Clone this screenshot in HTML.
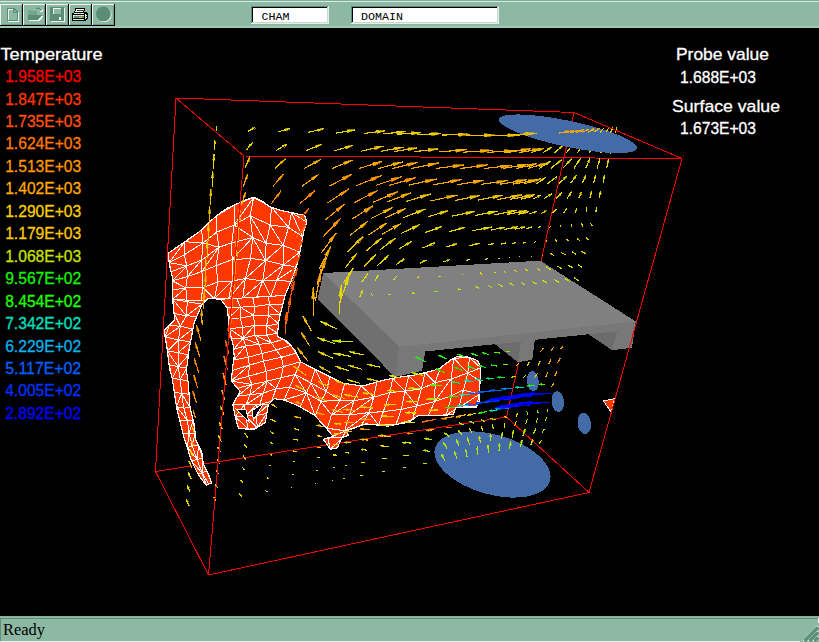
<!DOCTYPE html>
<html><head><meta charset="utf-8"><title>Viewer</title>
<style>
html,body{margin:0;padding:0;background:#000;overflow:hidden}
body{width:819px;height:642px}
svg{display:block}
</style></head><body>
<svg width="819" height="642" viewBox="0 0 819 642">
<rect x="0" y="0" width="819" height="642" fill="#000"/>
<g shape-rendering="crispEdges">
<path d="M176 98 L574 112.5" stroke="#FF0000" stroke-width="1" fill="none"/>
<path d="M574 112.5 L682 158.5" stroke="#FF0000" stroke-width="1" fill="none"/>
<path d="M682 158.5 L244 156" stroke="#FF0000" stroke-width="1" fill="none"/>
<path d="M244 156 L176 98" stroke="#FF0000" stroke-width="1" fill="none"/>
<path d="M574 112.5 L506.5 417" stroke="#FF0000" stroke-width="1" fill="none"/>
<path d="M155.5 471.5 L506.5 417" stroke="#FF0000" stroke-width="1" fill="none"/>
<path d="M506.5 417 L589 492.5" stroke="#FF0000" stroke-width="1" fill="none"/>
<ellipse cx="492.5" cy="464.5" rx="59.75" ry="29.9" transform="rotate(15.9 492.5 464.5)" fill="#426BA8"/>
<path d="M538.3 385.6 L538.1 386.4 L537.8 387.1 L537.6 387.8 L537.2 388.4 L536.9 389.0 L536.5 389.5 L536.1 389.9 L535.7 390.3 L535.2 390.6 L534.7 390.8 L534.2 391.0 L533.7 391.1 L533.2 391.1 L532.7 391.0 L532.2 390.9 L531.7 390.6 L531.2 390.3 L530.8 390.0 L530.3 389.6 L529.8 389.1 L529.4 388.5 L529.0 387.9 L528.7 387.3 L528.3 386.6 L528.0 385.8 L527.8 385.0 L527.6 384.2 L527.4 383.4 L527.2 382.6 L527.1 381.7 L527.1 380.8 L527.1 380.0 L527.1 379.1 L527.2 378.3 L527.3 377.5 L527.4 376.7 L527.6 375.9 L527.9 375.2 L528.1 374.5 L528.4 373.9 L528.8 373.4 L529.2 372.8 L529.6 372.4 L530.0 372.0 L530.5 371.7 L530.9 371.5 L531.4 371.3 L531.9 371.2 L532.4 371.2 L532.9 371.2 L533.4 371.4 L533.9 371.6 L534.4 371.9 L534.9 372.2 L535.4 372.6 L535.8 373.1 L536.3 373.7 L536.7 374.3 L537.0 374.9 L537.4 375.6 L537.7 376.4 L537.9 377.2 L538.2 378.0 L538.4 378.8 L538.5 379.7 L538.6 380.6 L538.7 381.4 L538.7 382.3 L538.7 383.2 L538.6 384.0 L538.5 384.9 Z" fill="#426BA8"/>
<path d="M563.6 406.5 L563.4 407.3 L563.1 408.0 L562.8 408.7 L562.5 409.3 L562.1 409.9 L561.7 410.4 L561.2 410.8 L560.8 411.2 L560.3 411.5 L559.7 411.7 L559.2 411.9 L558.7 411.9 L558.1 411.9 L557.6 411.8 L557.1 411.7 L556.5 411.4 L556.0 411.1 L555.5 410.7 L555.0 410.3 L554.5 409.7 L554.1 409.2 L553.7 408.5 L553.3 407.8 L552.9 407.1 L552.6 406.3 L552.3 405.5 L552.1 404.7 L551.9 403.8 L551.7 402.9 L551.6 402.1 L551.6 401.2 L551.6 400.3 L551.6 399.4 L551.7 398.6 L551.8 397.7 L552.0 396.9 L552.2 396.1 L552.4 395.4 L552.7 394.7 L553.1 394.1 L553.4 393.5 L553.9 393.0 L554.3 392.6 L554.7 392.2 L555.2 391.9 L555.7 391.6 L556.3 391.5 L556.8 391.4 L557.3 391.4 L557.9 391.5 L558.4 391.6 L559.0 391.8 L559.5 392.1 L560.0 392.5 L560.5 393.0 L561.0 393.5 L561.4 394.1 L561.9 394.7 L562.3 395.4 L562.6 396.1 L563.0 396.9 L563.3 397.7 L563.5 398.6 L563.7 399.5 L563.9 400.4 L564.0 401.3 L564.0 402.2 L564.0 403.1 L564.0 404.0 L563.9 404.8 L563.8 405.7 Z" fill="#426BA8"/>
<path d="M590.5 428.7 L590.3 429.5 L590.0 430.2 L589.6 430.9 L589.3 431.5 L588.9 432.1 L588.4 432.6 L587.9 433.1 L587.4 433.4 L586.9 433.7 L586.4 433.9 L585.8 434.1 L585.2 434.1 L584.6 434.1 L584.1 434.0 L583.5 433.8 L582.9 433.5 L582.3 433.2 L581.8 432.8 L581.3 432.3 L580.8 431.7 L580.3 431.1 L579.8 430.4 L579.4 429.7 L579.0 429.0 L578.7 428.1 L578.4 427.3 L578.1 426.4 L577.9 425.5 L577.8 424.6 L577.7 423.7 L577.6 422.8 L577.6 421.9 L577.6 421.0 L577.7 420.1 L577.9 419.2 L578.1 418.4 L578.3 417.6 L578.6 416.9 L578.9 416.2 L579.3 415.5 L579.7 414.9 L580.1 414.4 L580.6 414.0 L581.1 413.6 L581.6 413.3 L582.1 413.1 L582.7 412.9 L583.2 412.9 L583.8 412.9 L584.4 413.0 L585.0 413.1 L585.6 413.4 L586.1 413.7 L586.7 414.1 L587.2 414.6 L587.8 415.2 L588.2 415.8 L588.7 416.4 L589.1 417.2 L589.5 417.9 L589.9 418.8 L590.2 419.6 L590.4 420.5 L590.6 421.4 L590.8 422.3 L590.9 423.3 L591.0 424.2 L591.0 425.1 L590.9 426.1 L590.9 427.0 L590.7 427.8 Z" fill="#426BA8"/>
<path d="M323.1 273.1 L540.3 260.7 L635.8 321.5 L399.3 346.7 Z" fill="#808080"/>
<path d="M323.1 273.1 L399.3 346.7 L395.0 377.0 L317.6 299.5 Z" fill="#707070"/>
<path d="M399.3 346.7 L635.8 321.5 L632.0 347.7 L612.0 350.2 L617.0 331.3 L588.4 334.3 L534.8 339.8 L532.3 359.7 L517.9 362.2 L521.0 341.7 L495.0 344.2 L425.3 351.5 L422.0 370.9 L395.0 377.0 Z" fill="#787878"/>
<path d="M495.0 344.2 L521.0 341.7 L517.9 362.2 Z" fill="#6C6C6C"/>
<path d="M588.4 334.3 L617.0 331.3 L612.0 350.2 Z" fill="#6C6C6C"/>
<clipPath id="isoclip"><path d="M253.8 197.4 L261.6 200.7 L269.4 206.6 L281.1 210.5 L304.6 215.4 L306.9 222.2 L303.6 232.0 L300.7 248.6 L296.7 266.2 L290.9 281.8 L285.0 295.4 L279.2 318.8 L277.2 336.4 L287.0 341.3 L294.8 350.1 L300.7 361.8 L309.3 366.3 L326.2 374.8 L343.0 383.2 L362.7 386.0 L382.3 380.4 L396.4 377.6 L416.0 374.8 L427.3 372.0 L438.5 369.1 L449.7 360.7 L456.7 356.5 L466.6 356.5 L477.8 360.7 L480.6 367.7 L480.0 381.8 L479.2 401.4 L476.4 407.0 L463.8 407.0 L455.5 408.0 L453.3 414.7 L438.5 415.3 L418.0 415.4 L409.3 422.0 L388.0 426.1 L365.5 423.9 L354.2 428.1 L345.8 430.9 L348.6 435.1 L341.6 437.9 L337.4 447.8 L330.4 449.2 L323.4 439.3 L333.2 436.5 L326.2 428.1 L314.9 415.5 L298.0 405.6 L284.0 400.0 L274.2 398.7 L268.3 404.6 L265.4 422.4 L253.5 429.8 L238.7 428.3 L235.8 419.4 L232.8 404.6 L240.2 391.3 L231.3 381.0 L232.8 366.2 L234.2 356.0 L233.3 346.2 L229.3 328.6 L227.4 308.1 L220.6 299.3 L207.9 298.3 L202.0 304.2 L194.2 322.7 L189.3 348.1 L186.4 370.0 L188.4 384.0 L190.0 407.6 L194.4 425.3 L195.8 440.0 L201.8 452.0 L203.2 463.8 L209.0 475.6 L211.5 483.0 L206.2 485.0 L198.8 475.6 L191.4 460.8 L184.0 437.2 L176.6 407.6 L172.2 378.0 L169.8 370.0 L166.8 346.2 L163.9 330.6 L174.7 319.8 L172.7 299.3 L172.1 276.0 L169.8 266.2 L167.8 253.5 L183.4 242.7 L199.1 232.0 L214.7 217.3 L226.4 208.6 L246.0 199.8 Z"/></clipPath>
<path d="M253.8 197.4 L261.6 200.7 L269.4 206.6 L281.1 210.5 L304.6 215.4 L306.9 222.2 L303.6 232.0 L300.7 248.6 L296.7 266.2 L290.9 281.8 L285.0 295.4 L279.2 318.8 L277.2 336.4 L287.0 341.3 L294.8 350.1 L300.7 361.8 L309.3 366.3 L326.2 374.8 L343.0 383.2 L362.7 386.0 L382.3 380.4 L396.4 377.6 L416.0 374.8 L427.3 372.0 L438.5 369.1 L449.7 360.7 L456.7 356.5 L466.6 356.5 L477.8 360.7 L480.6 367.7 L480.0 381.8 L479.2 401.4 L476.4 407.0 L463.8 407.0 L455.5 408.0 L453.3 414.7 L438.5 415.3 L418.0 415.4 L409.3 422.0 L388.0 426.1 L365.5 423.9 L354.2 428.1 L345.8 430.9 L348.6 435.1 L341.6 437.9 L337.4 447.8 L330.4 449.2 L323.4 439.3 L333.2 436.5 L326.2 428.1 L314.9 415.5 L298.0 405.6 L284.0 400.0 L274.2 398.7 L268.3 404.6 L265.4 422.4 L253.5 429.8 L238.7 428.3 L235.8 419.4 L232.8 404.6 L240.2 391.3 L231.3 381.0 L232.8 366.2 L234.2 356.0 L233.3 346.2 L229.3 328.6 L227.4 308.1 L220.6 299.3 L207.9 298.3 L202.0 304.2 L194.2 322.7 L189.3 348.1 L186.4 370.0 L188.4 384.0 L190.0 407.6 L194.4 425.3 L195.8 440.0 L201.8 452.0 L203.2 463.8 L209.0 475.6 L211.5 483.0 L206.2 485.0 L198.8 475.6 L191.4 460.8 L184.0 437.2 L176.6 407.6 L172.2 378.0 L169.8 370.0 L166.8 346.2 L163.9 330.6 L174.7 319.8 L172.7 299.3 L172.1 276.0 L169.8 266.2 L167.8 253.5 L183.4 242.7 L199.1 232.0 L214.7 217.3 L226.4 208.6 L246.0 199.8 Z" fill="#FF3800"/>
<path d="M167.8 253.5L184.8 241.7 M184.8 241.7L201.6 229.7 M201.6 229.7L216.8 215.7 M216.8 215.7L234.3 205.0 M234.3 205.0L253.6 197.5 M253.6 197.5L271.5 207.3 M271.5 207.3L291.4 212.6 M291.4 212.6L306.9 222.2 M169.2 262.6L184.2 254.8 M184.2 254.8L202.9 243.0 M202.9 243.0L216.7 232.2 M216.7 232.2L234.1 225.0 M234.1 225.0L250.1 215.7 M250.1 215.7L270.1 225.0 M270.1 225.0L288.6 227.4 M288.6 227.4L302.7 236.9 M171.1 271.7L186.8 265.9 M186.8 265.9L201.7 260.0 M201.7 260.0L219.0 247.2 M219.0 247.2L231.7 242.9 M231.7 242.9L252.6 237.5 M252.6 237.5L266.1 243.3 M266.1 243.3L283.0 245.4 M283.0 245.4L299.9 252.0 M172.2 280.8L187.4 276.7 M187.4 276.7L201.9 271.4 M201.9 271.4L216.2 265.6 M216.2 265.6L232.1 259.7 M232.1 259.7L250.6 258.4 M250.6 258.4L265.6 260.5 M265.6 260.5L283.6 264.9 M283.6 264.9L296.4 266.9 M172.5 290.1L185.8 287.8 M185.8 287.8L202.9 287.6 M202.9 287.6L217.8 282.0 M217.8 282.0L232.3 281.0 M232.3 281.0L245.4 278.5 M245.4 278.5L262.7 280.9 M262.7 280.9L276.6 280.4 M276.6 280.4L291.1 281.3 M172.7 299.3L186.8 300.1 M186.8 300.1L200.9 300.9 M200.9 300.9L214.5 298.8 M214.5 298.8L228.6 298.8 M228.6 298.8L242.7 298.0 M242.7 298.0L256.8 297.1 M256.8 297.1L270.9 296.3 M270.9 296.3L285.0 295.4 M167.8 253.5L169.2 262.6 M184.8 241.7L184.2 254.8 M201.6 229.7L202.9 243.0 M216.8 215.7L216.7 232.2 M234.3 205.0L234.1 225.0 M253.6 197.5L250.1 215.7 M271.5 207.3L270.1 225.0 M291.4 212.6L288.6 227.4 M306.9 222.2L302.7 236.9 M169.2 262.6L171.1 271.7 M184.2 254.8L186.8 265.9 M202.9 243.0L201.7 260.0 M216.7 232.2L219.0 247.2 M234.1 225.0L231.7 242.9 M250.1 215.7L252.6 237.5 M270.1 225.0L266.1 243.3 M288.6 227.4L283.0 245.4 M302.7 236.9L299.9 252.0 M171.1 271.7L172.2 280.8 M186.8 265.9L187.4 276.7 M201.7 260.0L201.9 271.4 M219.0 247.2L216.2 265.6 M231.7 242.9L232.1 259.7 M252.6 237.5L250.6 258.4 M266.1 243.3L265.6 260.5 M283.0 245.4L283.6 264.9 M299.9 252.0L296.4 266.9 M172.2 280.8L172.5 290.1 M187.4 276.7L185.8 287.8 M201.9 271.4L202.9 287.6 M216.2 265.6L217.8 282.0 M232.1 259.7L232.3 281.0 M250.6 258.4L245.4 278.5 M265.6 260.5L262.7 280.9 M283.6 264.9L276.6 280.4 M296.4 266.9L291.1 281.3 M172.5 290.1L172.7 299.3 M185.8 287.8L186.8 300.1 M202.9 287.6L200.9 300.9 M217.8 282.0L214.5 298.8 M232.3 281.0L228.6 298.8 M245.4 278.5L242.7 298.0 M262.7 280.9L256.8 297.1 M276.6 280.4L270.9 296.3 M291.1 281.3L285.0 295.4 M184.8 241.7L169.2 262.6 M184.8 241.7L202.9 243.0 M253.6 197.5L234.1 225.0 M271.5 207.3L288.6 227.4 M291.4 212.6L302.7 236.9 M169.2 262.6L186.8 265.9 M202.9 243.0L219.0 247.2 M234.1 225.0L252.6 237.5 M250.1 215.7L266.1 243.3 M270.1 225.0L283.0 245.4 M186.8 265.9L172.2 280.8 M201.7 260.0L187.4 276.7 M219.0 247.2L201.9 271.4 M252.6 237.5L232.1 259.7 M252.6 237.5L265.6 260.5 M283.0 245.4L265.6 260.5 M299.9 252.0L283.6 264.9 M172.2 280.8L185.8 287.8 M265.6 260.5L245.4 278.5 M283.6 264.9L262.7 280.9 M296.4 266.9L276.6 280.4 M185.8 287.8L172.7 299.3 M202.9 287.6L214.5 298.8 M232.3 281.0L214.5 298.8 M245.4 278.5L228.6 298.8 M262.7 280.9L242.7 298.0 M262.7 280.9L270.9 296.3 M172.7 299.3L187.3 301.8 M187.3 301.8L202.0 304.2 M174.1 313.4L186.4 315.8 M186.4 315.8L196.9 316.4 M169.3 325.2L180.3 326.3 M180.3 326.3L193.0 329.0 M165.1 337.0L178.5 339.9 M178.5 339.9L190.5 341.9 M167.4 350.9L178.2 352.6 M178.2 352.6L188.4 355.0 M169.2 364.9L178.1 366.7 M178.1 366.7L186.7 368.1 M172.3 378.7L180.3 379.2 M180.3 379.2L188.0 381.2 M174.4 392.6L181.6 393.3 M181.6 393.3L189.1 394.3 M176.5 406.6L183.7 408.1 M183.7 408.1L190.0 407.5 M179.8 420.3L187.4 420.4 M187.4 420.4L193.2 420.4 M183.2 434.0L189.1 433.3 M189.1 433.3L195.2 433.4 M187.3 447.6L192.1 445.8 M192.1 445.8L198.7 445.9 M191.5 461.0L197.0 459.3 M197.0 459.3L202.6 458.4 M197.8 473.7L202.0 473.0 M202.0 473.0L206.6 470.7 M206.2 485.0L208.8 484.0 M208.8 484.0L211.5 483.0 M172.7 299.3L174.1 313.4 M187.3 301.8L186.4 315.8 M202.0 304.2L196.9 316.4 M174.1 313.4L169.3 325.2 M186.4 315.8L180.3 326.3 M196.9 316.4L193.0 329.0 M169.3 325.2L165.1 337.0 M180.3 326.3L178.5 339.9 M193.0 329.0L190.5 341.9 M165.1 337.0L167.4 350.9 M178.5 339.9L178.2 352.6 M190.5 341.9L188.4 355.0 M167.4 350.9L169.2 364.9 M178.2 352.6L178.1 366.7 M188.4 355.0L186.7 368.1 M169.2 364.9L172.3 378.7 M178.1 366.7L180.3 379.2 M186.7 368.1L188.0 381.2 M172.3 378.7L174.4 392.6 M180.3 379.2L181.6 393.3 M188.0 381.2L189.1 394.3 M174.4 392.6L176.5 406.6 M181.6 393.3L183.7 408.1 M189.1 394.3L190.0 407.5 M176.5 406.6L179.8 420.3 M183.7 408.1L187.4 420.4 M190.0 407.5L193.2 420.4 M179.8 420.3L183.2 434.0 M187.4 420.4L189.1 433.3 M193.2 420.4L195.2 433.4 M183.2 434.0L187.3 447.6 M189.1 433.3L192.1 445.8 M195.2 433.4L198.7 445.9 M187.3 447.6L191.5 461.0 M192.1 445.8L197.0 459.3 M198.7 445.9L202.6 458.4 M191.5 461.0L197.8 473.7 M197.0 459.3L202.0 473.0 M202.6 458.4L206.6 470.7 M197.8 473.7L206.2 485.0 M202.0 473.0L208.8 484.0 M206.6 470.7L211.5 483.0 M172.7 299.3L186.4 315.8 M202.0 304.2L186.4 315.8 M174.1 313.4L180.3 326.3 M180.3 326.3L165.1 337.0 M193.0 329.0L178.5 339.9 M178.5 339.9L167.4 350.9 M190.5 341.9L178.2 352.6 M167.4 350.9L178.1 366.7 M188.4 355.0L178.1 366.7 M178.1 366.7L172.3 378.7 M186.7 368.1L180.3 379.2 M181.6 393.3L176.5 406.6 M181.6 393.3L190.0 407.5 M176.5 406.6L187.4 420.4 M193.2 420.4L189.1 433.3 M189.1 433.3L187.3 447.6 M195.2 433.4L192.1 445.8 M187.3 447.6L197.0 459.3 M198.7 445.9L197.0 459.3 M191.5 461.0L202.0 473.0 M202.6 458.4L202.0 473.0 M202.0 473.0L206.2 485.0 M220.6 299.3L236.7 298.3 M236.7 298.3L252.8 297.4 M252.8 297.4L268.9 296.4 M268.9 296.4L285.0 295.4 M227.1 307.7L240.3 307.1 M240.3 307.1L254.6 306.5 M254.6 306.5L269.1 304.5 M269.1 304.5L282.7 304.8 M228.3 318.1L240.2 318.0 M240.2 318.0L253.8 315.5 M253.8 315.5L268.5 315.1 M268.5 315.1L280.3 314.2 M229.3 328.7L242.5 327.4 M242.5 327.4L254.3 325.4 M254.3 325.4L266.6 325.9 M266.6 325.9L278.6 323.8 M231.7 339.0L243.2 338.2 M243.2 338.2L255.0 335.2 M255.0 335.2L266.7 335.0 M266.7 335.0L277.5 333.4 M233.6 349.4L245.5 345.8 M245.5 345.8L259.3 344.3 M259.3 344.3L271.3 342.8 M271.3 342.8L283.2 339.4 M233.7 359.9L248.4 357.3 M248.4 357.3L261.9 353.4 M261.9 353.4L276.2 350.1 M276.2 350.1L290.6 345.4 M232.4 370.5L249.3 365.2 M249.3 365.2L263.5 361.1 M263.5 361.1L281.5 357.3 M281.5 357.3L296.3 353.1 M231.3 381.0L248.6 376.2 M248.6 376.2L266.0 371.4 M266.0 371.4L283.4 366.6 M283.4 366.6L300.7 361.8 M220.6 299.3L227.1 307.7 M236.7 298.3L240.3 307.1 M252.8 297.4L254.6 306.5 M268.9 296.4L269.1 304.5 M285.0 295.4L282.7 304.8 M227.1 307.7L228.3 318.1 M240.3 307.1L240.2 318.0 M254.6 306.5L253.8 315.5 M269.1 304.5L268.5 315.1 M282.7 304.8L280.3 314.2 M228.3 318.1L229.3 328.7 M240.2 318.0L242.5 327.4 M253.8 315.5L254.3 325.4 M268.5 315.1L266.6 325.9 M280.3 314.2L278.6 323.8 M229.3 328.7L231.7 339.0 M242.5 327.4L243.2 338.2 M254.3 325.4L255.0 335.2 M266.6 325.9L266.7 335.0 M278.6 323.8L277.5 333.4 M231.7 339.0L233.6 349.4 M243.2 338.2L245.5 345.8 M255.0 335.2L259.3 344.3 M266.7 335.0L271.3 342.8 M277.5 333.4L283.2 339.4 M233.6 349.4L233.7 359.9 M245.5 345.8L248.4 357.3 M259.3 344.3L261.9 353.4 M271.3 342.8L276.2 350.1 M283.2 339.4L290.6 345.4 M233.7 359.9L232.4 370.5 M248.4 357.3L249.3 365.2 M261.9 353.4L263.5 361.1 M276.2 350.1L281.5 357.3 M290.6 345.4L296.3 353.1 M232.4 370.5L231.3 381.0 M249.3 365.2L248.6 376.2 M263.5 361.1L266.0 371.4 M281.5 357.3L283.4 366.6 M296.3 353.1L300.7 361.8 M240.3 307.1L228.3 318.1 M240.3 307.1L253.8 315.5 M269.1 304.5L280.3 314.2 M268.5 315.1L278.6 323.8 M229.3 328.7L243.2 338.2 M254.3 325.4L243.2 338.2 M266.6 325.9L277.5 333.4 M243.2 338.2L233.6 349.4 M243.2 338.2L259.3 344.3 M255.0 335.2L271.3 342.8 M245.5 345.8L233.7 359.9 M249.3 365.2L231.3 381.0 M231.3 381.0L248.6 376.2 M248.6 376.2L266.0 371.4 M266.0 371.4L283.4 366.6 M283.4 366.6L300.7 361.8 M237.6 388.3L251.8 384.5 M251.8 384.5L267.1 381.3 M267.1 381.3L281.0 377.7 M281.0 377.7L295.1 374.5 M237.5 396.2L250.0 394.7 M250.0 394.7L263.4 393.1 M263.4 393.1L276.0 388.7 M276.0 388.7L289.6 387.3 M232.8 404.6L246.2 404.6 M246.2 404.6L259.7 404.6 M259.7 404.6L271.7 401.2 M271.7 401.2L284.0 400.0 M231.3 381.0L237.6 388.3 M248.6 376.2L251.8 384.5 M266.0 371.4L267.1 381.3 M283.4 366.6L281.0 377.7 M300.7 361.8L295.1 374.5 M237.6 388.3L237.5 396.2 M251.8 384.5L250.0 394.7 M267.1 381.3L263.4 393.1 M281.0 377.7L276.0 388.7 M295.1 374.5L289.6 387.3 M237.5 396.2L232.8 404.6 M250.0 394.7L246.2 404.6 M263.4 393.1L259.7 404.6 M276.0 388.7L271.7 401.2 M289.6 387.3L284.0 400.0 M231.3 381.0L251.8 384.5 M251.8 384.5L237.5 396.2 M267.1 381.3L250.0 394.7 M267.1 381.3L276.0 388.7 M263.4 393.1L246.2 404.6 M232.8 404.6L244.6 404.6 M244.6 404.6L256.5 404.6 M256.5 404.6L268.3 404.6 M235.2 416.6L245.6 416.2 M245.6 416.2L256.5 415.4 M256.5 415.4L266.9 413.5 M238.7 428.3L248.3 429.3 M248.3 429.3L257.2 427.5 M257.2 427.5L265.4 422.4 M232.8 404.6L235.2 416.6 M244.6 404.6L245.6 416.2 M256.5 404.6L256.5 415.4 M268.3 404.6L266.9 413.5 M235.2 416.6L238.7 428.3 M245.6 416.2L248.3 429.3 M256.5 415.4L257.2 427.5 M266.9 413.5L265.4 422.4 M244.6 404.6L235.2 416.6 M256.5 404.6L245.6 416.2 M268.3 404.6L256.5 415.4 M235.2 416.6L248.3 429.3 M245.6 416.2L257.2 427.5 M266.9 413.5L257.2 427.5 M300.7 361.8L315.3 369.3 M315.3 369.3L329.9 376.7 M329.9 376.7L344.7 383.4 M344.7 383.4L361.0 385.8 M361.0 385.8L376.8 382.0 M376.8 382.0L392.7 378.3 M392.7 378.3L408.9 375.8 M408.9 375.8L425.0 372.6 M425.0 372.6L440.4 367.7 M440.4 367.7L453.8 358.2 M453.8 358.2L469.5 357.6 M469.5 357.6L480.6 367.7 M295.1 374.5L310.8 382.8 M310.8 382.8L326.3 391.5 M326.3 391.5L340.1 400.1 M340.1 400.1L353.9 400.7 M353.9 400.7L373.7 397.2 M373.7 397.2L390.0 392.5 M390.0 392.5L405.0 391.2 M405.0 391.2L421.5 388.7 M421.5 388.7L435.2 382.6 M435.2 382.6L451.1 379.0 M451.1 379.0L467.8 373.1 M467.8 373.1L480.0 381.0 M289.6 387.3L306.5 392.9 M306.5 392.9L320.9 401.4 M320.9 401.4L331.5 414.9 M331.5 414.9L349.5 414.8 M349.5 414.8L369.1 412.6 M369.1 412.6L383.3 411.6 M383.3 411.6L401.4 409.3 M401.4 409.3L416.6 406.0 M416.6 406.0L434.6 401.6 M434.6 401.6L451.7 395.6 M451.7 395.6L463.4 390.0 M463.4 390.0L479.5 394.3 M284.0 400.0L300.1 406.9 M300.1 406.9L315.2 415.9 M315.2 415.9L327.3 428.3 M327.3 428.3L344.7 430.7 M344.7 430.7L361.3 425.4 M361.3 425.4L378.6 425.2 M378.6 425.2L395.9 424.6 M395.9 424.6L412.5 419.6 M412.5 419.6L428.6 415.3 M428.6 415.3L446.2 415.0 M446.2 415.0L458.9 407.6 M458.9 407.6L476.4 407.0 M300.7 361.8L295.1 374.5 M315.3 369.3L310.8 382.8 M329.9 376.7L326.3 391.5 M344.7 383.4L340.1 400.1 M361.0 385.8L353.9 400.7 M376.8 382.0L373.7 397.2 M392.7 378.3L390.0 392.5 M408.9 375.8L405.0 391.2 M425.0 372.6L421.5 388.7 M440.4 367.7L435.2 382.6 M453.8 358.2L451.1 379.0 M469.5 357.6L467.8 373.1 M480.6 367.7L480.0 381.0 M295.1 374.5L289.6 387.3 M310.8 382.8L306.5 392.9 M326.3 391.5L320.9 401.4 M340.1 400.1L331.5 414.9 M353.9 400.7L349.5 414.8 M373.7 397.2L369.1 412.6 M390.0 392.5L383.3 411.6 M405.0 391.2L401.4 409.3 M421.5 388.7L416.6 406.0 M435.2 382.6L434.6 401.6 M451.1 379.0L451.7 395.6 M467.8 373.1L463.4 390.0 M480.0 381.0L479.5 394.3 M289.6 387.3L284.0 400.0 M306.5 392.9L300.1 406.9 M320.9 401.4L315.2 415.9 M331.5 414.9L327.3 428.3 M349.5 414.8L344.7 430.7 M369.1 412.6L361.3 425.4 M383.3 411.6L378.6 425.2 M401.4 409.3L395.9 424.6 M416.6 406.0L412.5 419.6 M434.6 401.6L428.6 415.3 M451.7 395.6L446.2 415.0 M463.4 390.0L458.9 407.6 M479.5 394.3L476.4 407.0 M315.3 369.3L326.3 391.5 M361.0 385.8L373.7 397.2 M392.7 378.3L405.0 391.2 M408.9 375.8L421.5 388.7 M425.0 372.6L435.2 382.6 M453.8 358.2L467.8 373.1 M480.6 367.7L467.8 373.1 M295.1 374.5L306.5 392.9 M310.8 382.8L320.9 401.4 M340.1 400.1L320.9 401.4 M353.9 400.7L331.5 414.9 M373.7 397.2L349.5 414.8 M405.0 391.2L416.6 406.0 M451.1 379.0L434.6 401.6 M306.5 392.9L284.0 400.0 M306.5 392.9L315.2 415.9 M369.1 412.6L344.7 430.7 M369.1 412.6L378.6 425.2 M479.5 394.3L458.9 407.6 M326.2 428.1L345.8 430.9 M327.7 438.1L342.5 437.6 M330.4 449.2L337.4 447.8 M326.2 428.1L327.7 438.1 M345.8 430.9L342.5 437.6 M327.7 438.1L330.4 449.2 M342.5 437.6L337.4 447.8 M345.8 430.9L327.7 438.1 M342.5 437.6L330.4 449.2" stroke="#fff" stroke-width="1" fill="none" clip-path="url(#isoclip)"/>
<path d="M253.8 197.4 L261.6 200.7 L269.4 206.6 L281.1 210.5 L304.6 215.4 L306.9 222.2 L303.6 232.0 L300.7 248.6 L296.7 266.2 L290.9 281.8 L285.0 295.4 L279.2 318.8 L277.2 336.4 L287.0 341.3 L294.8 350.1 L300.7 361.8 L309.3 366.3 L326.2 374.8 L343.0 383.2 L362.7 386.0 L382.3 380.4 L396.4 377.6 L416.0 374.8 L427.3 372.0 L438.5 369.1 L449.7 360.7 L456.7 356.5 L466.6 356.5 L477.8 360.7 L480.6 367.7 L480.0 381.8 L479.2 401.4 L476.4 407.0 L463.8 407.0 L455.5 408.0 L453.3 414.7 L438.5 415.3 L418.0 415.4 L409.3 422.0 L388.0 426.1 L365.5 423.9 L354.2 428.1 L345.8 430.9 L348.6 435.1 L341.6 437.9 L337.4 447.8 L330.4 449.2 L323.4 439.3 L333.2 436.5 L326.2 428.1 L314.9 415.5 L298.0 405.6 L284.0 400.0 L274.2 398.7 L268.3 404.6 L265.4 422.4 L253.5 429.8 L238.7 428.3 L235.8 419.4 L232.8 404.6 L240.2 391.3 L231.3 381.0 L232.8 366.2 L234.2 356.0 L233.3 346.2 L229.3 328.6 L227.4 308.1 L220.6 299.3 L207.9 298.3 L202.0 304.2 L194.2 322.7 L189.3 348.1 L186.4 370.0 L188.4 384.0 L190.0 407.6 L194.4 425.3 L195.8 440.0 L201.8 452.0 L203.2 463.8 L209.0 475.6 L211.5 483.0 L206.2 485.0 L198.8 475.6 L191.4 460.8 L184.0 437.2 L176.6 407.6 L172.2 378.0 L169.8 370.0 L166.8 346.2 L163.9 330.6 L174.7 319.8 L172.7 299.3 L172.1 276.0 L169.8 266.2 L167.8 253.5 L183.4 242.7 L199.1 232.0 L214.7 217.3 L226.4 208.6 L246.0 199.8 Z" fill="none" stroke="#fff" stroke-width="1.2"/>
<path d="M235.8 409 L249 421.8 L246 410 Z M252 410.6 L263.9 403 L253.5 420 Z" fill="#000" stroke="#fff" stroke-width="1"/>
<path d="M603.4 401 L614.6 398.6 L611.3 412.3 Z" fill="#FF3800" stroke="#fff" stroke-width="1"/>
<path d="M214.9 149.8L214.9 139.5M213.5 168.6L214.0 154.3M192.8 456.1L190.0 449.5M191.9 467.9L188.9 461.0M191.1 478.9L188.1 471.9M190.2 492.4L187.2 485.4M189.2 506.1L186.2 499.1M246.4 150.1L252.8 141.8M222.4 429.2L219.4 422.3M221.4 441.6L218.4 435.5M220.5 451.9L217.6 446.6M219.5 463.6L216.9 459.3M218.5 474.4L216.0 470.4M217.4 487.7L214.9 483.7M216.2 501.3L213.7 497.2M248.0 437.7L244.7 433.0M246.9 447.9L243.6 443.5M245.8 459.4L243.0 455.8M244.7 470.1L242.3 467.2M243.4 483.3L240.4 479.8M242.1 496.7L239.0 493.1M274.2 433.8L270.1 431.5M273.1 444.0L270.1 442.2M271.8 455.3L269.8 454.1M270.6 465.9L268.6 464.7M269.2 478.9L266.8 477.5M267.7 492.1L265.2 490.6M298.1 440.2L293.4 439.0M296.7 451.4L293.3 451.0M295.4 461.8L293.3 461.8M293.8 474.7L292.4 474.5M292.2 487.8L291.0 487.0M343.2 283.2L353.4 268.0M341.1 298.7L349.4 274.6M339.1 313.9L341.4 284.3M333.0 358.3L317.9 351.6M320.9 447.6L317.5 447.3M319.5 457.9L317.3 457.9M317.8 470.6L316.3 470.6M316.0 483.5L314.9 483.5M361.8 282.0L367.7 273.6M349.0 370.7L335.4 366.4M339.9 433.8L333.7 433.7M338.3 444.8L332.6 444.7M336.8 455.1L333.0 455.0M335.0 467.7L333.1 467.7M333.1 480.5L331.8 480.5M377.3 265.7L389.3 254.7M361.8 369.2L348.2 365.3M359.7 383.2L347.1 379.8M349.2 453.0L344.8 452.7M347.3 465.6L345.1 465.6M345.4 478.3L343.4 478.3M398.5 249.2L412.2 241.1M396.1 264.7L404.4 258.5M377.6 380.9L367.0 378.8M366.6 450.2L360.6 449.3M364.6 462.7L361.2 462.3M362.6 475.3L360.5 475.2M425.2 232.6L442.0 226.5M422.5 248.1L435.2 242.6M419.9 263.3L426.4 260.0M398.2 391.6L386.6 390.2M388.9 446.6L379.8 445.7M384.7 471.4L382.2 471.3M449.0 231.7L464.7 227.5M446.3 246.9L457.3 243.6M443.5 262.0L449.7 259.7M474.7 215.5L497.5 211.1M471.8 230.8L491.8 227.0M468.9 245.8L479.7 243.2M466.1 260.7L469.6 259.2M463.3 275.3L462.6 274.2M437.7 410.0L428.7 410.2M490.7 230.1L505.0 227.2M487.7 244.9L494.2 243.3M484.8 259.6L487.9 258.5M503.8 229.5L518.2 226.7M500.7 244.3L505.8 242.9M497.8 258.9L500.3 257.8M518.0 214.3L528.9 211.7M514.8 229.1L524.9 227.0M511.8 243.8L516.3 242.5M508.7 258.2L509.7 257.1M476.2 413.2L467.2 415.4M539.4 168.5L551.3 160.7M536.1 183.8L545.9 177.3M532.9 199.0L541.1 195.0M529.6 213.9L536.6 211.4M526.5 228.7L532.1 226.9M523.3 243.2L526.4 241.8M520.3 257.6L519.3 256.2M554.1 153.0L563.7 145.2M550.7 168.5L561.5 159.8M547.4 183.7L556.9 176.5M544.1 198.7L551.9 193.6M540.8 213.6L546.5 210.8M537.6 228.2L540.7 226.2M534.4 242.7L535.8 241.1M531.3 257.0L531.0 255.7M528.2 271.0L525.6 269.2M566.0 153.1L574.3 142.8M562.6 168.5L571.6 158.8M559.2 183.6L567.3 175.6M555.8 198.5L561.8 192.6M552.5 213.2L556.5 209.3M549.2 227.8L551.4 225.6M546.0 242.1L546.9 240.4M542.8 256.3L542.3 254.9M577.4 153.2L583.9 142.1M573.9 168.5L580.6 158.1M570.5 183.5L576.5 175.1M567.0 198.3L571.5 191.9M563.7 212.9L566.6 208.3M560.4 227.3L560.7 224.6M557.1 241.6L555.0 239.5M553.9 255.7L550.6 253.3M589.3 153.4L593.6 142.3M585.7 168.4L590.0 158.1M582.2 183.3L586.1 174.8M578.8 198.1L581.6 191.6M575.4 212.6L576.9 207.7M572.0 226.9L571.3 224.0M568.7 241.0L565.7 238.8M565.4 255.0L561.2 252.4M600.7 153.5L603.7 142.9M597.1 168.4L599.9 158.5M593.5 183.2L595.9 174.9M590.0 197.8L591.7 191.4M586.6 212.2L586.9 207.5M583.1 226.5L581.3 223.6M579.8 240.5L576.7 238.3M576.4 254.4L572.2 251.8M610.2 153.6L612.9 143.2M606.6 168.4L608.8 158.7M603.0 183.1L604.7 175.0M599.5 197.6L600.7 191.3M596.0 212.0L596.2 207.1M592.5 226.1L590.5 223.1M589.1 240.1L586.0 237.8M585.7 253.8L581.6 251.3" stroke="#E6D700" stroke-width="1.15" fill="none"/>
<path d="M214.9 139.5L215.9 143.6L213.9 143.6ZM214.0 154.3L214.8 160.1L212.8 160.0ZM190.0 449.5L192.0 451.8L190.2 452.6ZM188.9 461.0L191.1 463.4L189.2 464.1ZM188.1 471.9L190.3 474.3L188.4 475.1ZM187.2 485.4L189.3 487.8L187.4 488.6ZM186.2 499.1L188.3 501.5L186.5 502.3ZM252.8 141.8L251.0 145.7L249.5 144.5ZM219.4 422.3L221.5 424.7L219.7 425.5ZM218.4 435.5L220.5 437.5L218.7 438.4ZM217.6 446.6L219.6 448.3L217.9 449.2ZM353.4 268.0L350.4 274.8L348.3 273.4ZM349.4 274.6L347.6 284.8L344.6 283.7ZM341.4 284.3L342.1 296.3L338.9 296.0ZM317.9 351.6L324.4 353.2L323.5 355.4ZM367.7 273.6L366.1 277.5L364.5 276.4ZM335.4 366.4L341.1 367.2L340.5 369.1ZM333.7 433.7L336.2 432.8L336.1 434.8ZM389.3 254.7L385.3 259.9L383.7 258.3ZM348.2 365.3L353.9 365.9L353.4 367.8ZM347.1 379.8L352.4 380.2L351.9 382.1ZM412.2 241.1L407.3 245.3L406.2 243.4ZM404.4 258.5L401.7 261.8L400.5 260.2ZM367.0 378.8L371.4 378.7L371.0 380.6ZM360.6 449.3L363.1 448.7L362.8 450.6ZM442.0 226.5L435.7 230.1L434.8 227.8ZM435.2 242.6L430.5 245.7L429.8 243.9ZM426.4 260.0L424.3 262.2L423.4 260.4ZM386.6 390.2L391.4 389.8L391.1 391.7ZM379.8 445.7L383.5 445.0L383.3 447.0ZM464.7 227.5L458.7 230.3L458.1 228.1ZM457.3 243.6L453.2 245.9L452.6 244.0ZM449.7 259.7L447.6 261.5L446.9 259.7ZM497.5 211.1L488.7 214.5L488.1 211.3ZM491.8 227.0L484.0 229.9L483.5 227.1ZM479.7 243.2L475.6 245.2L475.2 243.3ZM428.7 410.2L432.2 409.1L432.3 411.1ZM505.0 227.2L499.5 229.3L499.1 227.3ZM494.2 243.3L491.9 244.9L491.4 243.0ZM518.2 226.7L512.6 228.8L512.2 226.8ZM528.9 211.7L524.7 213.7L524.3 211.8ZM524.9 227.0L521.1 228.8L520.7 226.8ZM467.2 415.4L470.6 413.5L471.1 415.5ZM551.3 160.7L547.1 164.6L546.0 163.0ZM545.9 177.3L542.5 180.7L541.4 179.1ZM541.1 195.0L538.2 197.5L537.4 195.7ZM536.6 211.4L534.1 213.4L533.5 211.5ZM563.7 145.2L560.5 149.1L559.2 147.5ZM561.5 159.8L557.8 164.1L556.6 162.5ZM556.9 176.5L553.7 180.2L552.5 178.6ZM551.9 193.6L549.3 196.5L548.2 194.8ZM546.5 210.8L544.7 212.8L543.8 211.0ZM574.3 142.8L571.8 147.6L570.2 146.3ZM571.6 158.8L568.7 163.3L567.3 162.0ZM567.3 175.6L564.8 179.5L563.3 178.1ZM561.8 192.6L560.1 195.6L558.7 194.2ZM583.9 142.1L582.2 147.1L580.4 146.1ZM580.6 158.1L578.8 162.8L577.1 161.7ZM576.5 175.1L574.9 179.0L573.3 177.9ZM571.5 191.9L570.5 195.1L568.9 193.9ZM593.6 142.3L592.8 147.1L591.0 146.3ZM590.0 158.1L589.2 162.6L587.4 161.9ZM586.1 174.8L585.5 178.6L583.6 177.8ZM581.6 191.6L581.4 194.6L579.6 193.8ZM603.7 142.9L603.5 147.4L601.6 146.8ZM599.9 158.5L599.7 162.7L597.8 162.2ZM595.9 174.9L595.9 178.5L594.0 177.9ZM591.7 191.4L592.0 194.2L590.1 193.7ZM612.9 143.2L612.8 147.6L610.8 147.1ZM608.8 158.7L608.9 162.8L606.9 162.4ZM604.7 175.0L605.0 178.4L603.1 178.0ZM600.7 191.3L601.2 194.0L599.2 193.6Z" fill="#E6D700" stroke="#E6D700" stroke-width="0.6"/>
<path d="M212.2 187.2L212.7 171.2M208.3 241.0L208.3 224.0M207.1 258.4L207.1 241.4M223.7 414.6L220.7 406.1M276.4 150.4L287.4 143.7M305.9 150.7L321.9 144.3M275.6 421.7L270.5 418.9M334.0 150.9L353.0 145.4M299.3 430.2L293.8 428.6M345.4 267.6L357.1 252.8M331.1 372.7L318.7 366.2M366.3 250.8L381.7 237.9M364.0 266.5L375.7 254.6M346.9 384.7L334.9 380.6M341.3 424.0L334.2 423.8M379.7 250.1L395.5 238.2M357.6 397.0L344.3 394.7M350.7 442.9L344.4 442.4M403.5 217.6L425.5 209.1M401.0 233.5L420.2 224.5M375.4 394.6L363.0 392.9M373.3 408.1L360.0 406.9M427.8 216.9L448.2 210.6M395.9 404.9L383.9 404.9M394.0 416.3L381.7 416.0M390.6 436.6L377.8 435.3M451.8 216.2L475.4 211.3M493.7 215.0L517.0 210.3M506.8 214.6L527.1 210.5M521.1 199.2L534.0 195.6M542.8 152.9L552.3 146.8M529.4 362.1L527.1 366.1M537.6 373.2L534.7 377.7" stroke="#EBCD00" stroke-width="1.15" fill="none"/>
<path d="M212.7 171.2L213.6 177.6L211.4 177.6ZM208.3 224.0L209.5 230.8L207.1 230.8ZM207.1 241.4L208.2 248.2L205.9 248.2ZM220.7 406.1L222.8 409.2L220.9 409.9ZM287.4 143.7L283.5 147.2L282.4 145.5ZM321.9 144.3L315.9 147.9L315.0 145.7ZM353.0 145.4L345.8 148.9L345.0 146.3ZM357.1 252.8L353.4 259.5L351.4 257.9ZM318.7 366.2L324.1 367.9L323.2 369.7ZM381.7 237.9L376.5 244.1L374.7 242.0ZM375.7 254.6L371.9 260.2L370.2 258.5ZM334.9 380.6L340.1 381.3L339.4 383.2ZM334.2 423.8L337.1 422.9L337.0 424.9ZM395.5 238.2L390.0 244.1L388.3 241.9ZM344.3 394.7L349.8 394.6L349.4 396.6ZM344.4 442.4L347.0 441.6L346.8 443.6ZM425.5 209.1L417.3 214.0L416.2 211.0ZM420.2 224.5L413.2 229.5L411.9 226.8ZM363.0 392.9L368.1 392.6L367.9 394.6ZM360.0 406.9L365.4 406.4L365.3 408.4ZM448.2 210.6L440.5 214.5L439.6 211.7ZM383.9 404.9L388.7 403.9L388.7 405.9ZM381.7 416.0L386.7 415.1L386.6 417.1ZM377.8 435.3L383.0 434.8L382.8 436.8ZM475.4 211.3L466.3 214.8L465.7 211.7ZM517.0 210.3L508.0 213.7L507.4 210.6ZM527.1 210.5L519.3 213.6L518.7 210.7ZM534.0 195.6L529.1 198.0L528.6 196.1ZM552.3 146.8L549.0 150.1L547.9 148.4Z" fill="#EBCD00" stroke="#EBCD00" stroke-width="0.6"/>
<path d="M210.9 205.4L210.9 188.8M209.6 223.4L209.6 206.4M205.8 275.5L205.9 258.5M193.5 445.6L191.3 439.9M244.8 168.6L249.9 156.5M277.2 407.6L271.3 404.0M311.6 331.3L302.7 315.7M306.1 375.6L293.5 366.2M304.3 390.0L294.9 385.2M361.2 151.2L383.7 146.1M347.5 251.7L363.0 236.5M329.2 386.9L318.0 381.5M322.4 436.5L316.8 435.7M380.6 151.4L403.6 147.0M394.5 151.5L416.9 147.9M414.0 151.7L438.0 148.9M406.1 201.5L430.8 193.9M368.2 440.1L360.4 439.4M392.4 425.9L379.1 424.7M454.6 200.5L480.0 195.6M477.6 200.1L503.0 195.2M496.7 199.7L522.2 194.8M509.9 199.4L534.7 194.6M530.8 152.8L544.1 148.3M524.3 183.9L540.8 178.7M554.2 382.8L551.2 387.3" stroke="#F0BE00" stroke-width="1.15" fill="none"/>
<path d="M210.9 188.8L212.0 195.5L209.7 195.5ZM209.6 206.4L210.8 213.2L208.4 213.2ZM205.9 258.5L207.0 265.3L204.7 265.3ZM191.3 439.9L193.1 441.8L191.3 442.6ZM249.9 156.5L248.8 161.7L246.9 160.9ZM271.3 404.0L274.2 404.6L273.1 406.3ZM302.7 315.7L307.4 321.3L305.2 322.5ZM293.5 366.2L299.2 369.1L297.9 370.8ZM294.9 385.2L299.1 386.3L298.2 388.0ZM383.7 146.1L375.0 149.7L374.3 146.6ZM363.0 236.5L357.9 243.7L355.8 241.5ZM318.0 381.5L322.9 382.8L322.0 384.5ZM403.6 147.0L394.7 150.3L394.1 147.2ZM416.9 147.9L408.2 150.9L407.7 147.8ZM438.0 148.9L428.6 151.6L428.2 148.4ZM430.8 193.9L421.4 198.5L420.4 195.4ZM360.4 439.4L363.6 438.7L363.4 440.7ZM379.1 424.7L384.5 424.2L384.3 426.2ZM480.0 195.6L470.2 199.2L469.6 196.0ZM503.0 195.2L493.2 198.7L492.6 195.6ZM522.2 194.8L512.3 198.3L511.7 195.2ZM534.7 194.6L525.1 198.1L524.5 195.0ZM544.1 148.3L539.1 151.0L538.5 149.1ZM540.8 178.7L534.5 182.0L533.8 179.7Z" fill="#F0BE00" stroke="#F0BE00" stroke-width="0.6"/>
<path d="M204.6 292.4L205.8 274.2M203.4 309.0L204.5 291.3M202.2 325.3L201.5 309.2M194.4 433.1L192.4 426.9M243.2 186.9L247.8 173.9M241.7 204.8L245.6 191.7M240.2 222.5L239.3 205.5M238.7 239.9L237.7 222.4M237.2 257.0L236.2 239.0M224.9 399.9L221.9 390.1M274.6 168.6L285.5 158.8M303.9 168.6L320.6 159.6M331.8 168.6L352.5 160.1M319.3 269.1L330.8 246.4M313.5 316.1L313.1 287.1M309.7 346.3L300.8 331.6M307.9 361.1L297.3 347.8M302.6 404.2L295.6 402.0M300.8 418.2L294.4 416.2M349.7 235.5L368.1 221.1M327.3 401.0L315.7 396.8M323.8 426.6L316.4 425.2M378.1 168.6L403.3 161.8M370.9 218.6L392.5 207.6M368.6 234.8L387.2 222.8M344.9 398.6L332.8 394.8M343.0 412.3L331.6 409.4M386.9 201.9L411.1 192.8M384.5 218.2L406.1 208.4M382.0 234.3L401.3 223.4M355.5 410.6L343.2 409.2M352.3 431.9L344.3 431.7M438.8 151.9L466.8 149.7M430.5 201.0L457.6 195.0M463.3 152.2L492.5 150.3M486.7 152.4L516.2 150.6M480.6 184.4L507.7 180.5M433.9 429.7L425.9 430.5M506.1 152.6L530.7 148.9M502.9 168.5L528.2 164.3M499.8 184.2L526.5 179.9M519.5 152.7L541.0 148.5M516.3 168.5L537.2 163.7M513.1 184.1L539.0 179.7M465.8 414.7L455.8 417.2M527.6 168.5L546.4 163.3M540.5 360.7L537.9 365.5M548.2 371.8L545.7 376.9" stroke="#F5AF00" stroke-width="1.15" fill="none"/>
<path d="M205.8 274.2L206.6 281.5L204.1 281.4ZM204.5 291.3L205.3 298.4L202.8 298.3ZM201.5 309.2L202.9 315.6L200.7 315.7ZM192.4 426.9L194.2 429.0L192.3 429.7ZM247.8 173.9L246.9 179.4L245.0 178.7ZM245.6 191.7L245.0 197.2L243.1 196.6ZM239.3 205.5L240.8 212.2L238.5 212.4ZM237.7 222.4L239.3 229.3L236.9 229.4ZM236.2 239.0L237.9 246.1L235.4 246.3ZM221.9 390.1L224.1 393.7L222.2 394.3ZM285.5 158.8L281.8 163.5L280.4 161.9ZM320.6 159.6L314.6 164.4L313.3 162.0ZM352.5 160.1L344.8 164.9L343.6 162.0ZM330.8 246.4L327.6 256.2L324.7 254.8ZM313.1 287.1L314.8 298.6L311.6 298.7ZM300.8 331.6L305.4 336.8L303.3 338.1ZM297.3 347.8L302.5 352.3L300.6 353.8ZM295.6 402.0L298.7 401.9L298.1 403.9ZM294.4 416.2L297.2 416.1L296.7 418.0ZM368.1 221.1L361.7 228.2L359.7 225.6ZM315.7 396.8L320.7 397.5L320.0 399.4ZM316.4 425.2L319.5 424.8L319.1 426.7ZM403.3 161.8L393.6 166.1L392.8 163.0ZM392.5 207.6L384.6 213.4L383.1 210.6ZM387.2 222.8L380.6 228.9L378.9 226.3ZM332.8 394.8L338.0 395.4L337.4 397.3ZM331.6 409.4L336.4 409.6L335.9 411.5ZM411.1 192.8L402.0 197.9L400.9 194.9ZM406.1 208.4L398.1 213.8L396.8 210.9ZM401.3 223.4L394.4 229.1L392.8 226.4ZM343.2 409.2L348.2 408.8L348.0 410.8ZM344.3 431.7L347.5 430.8L347.5 432.8ZM466.8 149.7L455.8 152.2L455.5 149.0ZM457.6 195.0L447.1 198.9L446.4 195.8ZM492.5 150.3L481.0 152.6L480.8 149.4ZM516.2 150.6L504.5 152.9L504.3 149.7ZM507.7 180.5L497.1 183.6L496.6 180.5ZM425.9 430.5L429.0 429.2L429.2 431.2ZM530.7 148.9L521.1 152.0L520.6 148.8ZM528.2 164.3L518.4 167.6L517.8 164.4ZM526.5 179.9L516.1 183.2L515.5 180.0ZM541.0 148.5L532.7 151.7L532.1 148.7ZM537.2 163.7L529.1 167.0L528.5 164.1ZM539.0 179.7L528.9 183.0L528.4 179.9ZM455.8 417.2L459.6 415.3L460.1 417.2ZM546.4 163.3L539.2 166.7L538.5 164.0Z" fill="#F5AF00" stroke="#F5AF00" stroke-width="0.6"/>
<path d="M201.1 341.4L196.4 324.7M199.9 357.3L195.0 341.8M195.5 418.3L193.2 410.6M234.3 290.4L233.3 273.2M226.2 384.9L223.0 373.3M272.8 186.6L283.7 173.9M329.6 186.0L352.1 174.1M327.5 203.1L349.0 188.8M325.4 219.9L344.5 204.1M323.3 236.6L340.7 218.1M356.5 185.7L381.6 175.5M354.2 202.6L378.0 190.4M375.7 185.5L401.8 176.6M389.4 185.3L416.4 177.5M412.7 433.1L406.7 433.7M453.6 416.6L441.6 419.0M554.2 346.8L551.2 350.3M563.3 345.8L560.3 349.1M560.2 358.3L557.5 362.9" stroke="#FF9600" stroke-width="1.15" fill="none"/>
<path d="M196.4 324.7L199.4 331.0L197.1 331.7ZM195.0 341.8L198.0 347.6L195.9 348.3ZM193.2 410.6L195.1 413.4L193.2 414.0ZM233.3 273.2L235.0 280.0L232.5 280.1ZM223.0 373.3L225.2 377.7L223.3 378.2ZM283.7 173.9L280.2 179.7L278.4 178.2ZM352.1 174.1L343.8 180.3L342.3 177.4ZM349.0 188.8L341.3 195.9L339.5 193.2ZM344.5 204.1L337.9 211.7L335.8 209.2ZM340.7 218.1L334.9 226.6L332.6 224.4ZM381.6 175.5L372.1 181.0L370.9 178.1ZM378.0 190.4L369.2 196.7L367.7 193.8ZM401.8 176.6L391.9 181.7L390.9 178.6ZM416.4 177.5L406.1 182.2L405.2 179.1ZM406.7 433.7L409.0 432.5L409.2 434.4ZM441.6 419.0L446.2 417.1L446.6 419.0Z" fill="#FF9600" stroke="#FF9600" stroke-width="0.6"/>
<path d="M198.8 372.9L194.4 358.5M197.7 388.3L193.7 374.8M196.6 403.4L192.6 390.6M232.9 306.8L231.6 290.4M271.0 204.2L281.0 190.7M299.9 203.6L314.9 190.8" stroke="#FF8700" stroke-width="1.15" fill="none"/>
<path d="M194.4 358.5L197.2 363.9L195.2 364.6ZM193.7 374.8L196.2 379.9L194.3 380.4ZM192.6 390.6L195.2 395.4L193.3 396.0ZM231.6 290.4L233.3 296.8L231.0 297.0ZM281.0 190.7L278.0 196.8L276.1 195.4ZM314.9 190.8L309.8 197.0L308.0 194.9Z" fill="#FF8700" stroke="#FF8700" stroke-width="0.6"/>
<path d="M235.8 273.8L234.8 255.8M301.9 186.3L318.9 174.4M321.3 252.9L336.2 233.0M317.3 284.9L326.6 256.6M315.4 300.6L321.1 269.3M358.8 168.6L382.4 161.2M351.9 219.2L373.0 205.7M325.4 414.8L316.7 412.9M373.3 202.2L397.6 191.7M391.9 168.6L418.1 162.3M353.8 422.2L344.3 422.1M411.3 168.5L439.2 162.8M408.7 185.1L436.9 178.9M371.5 419.6L360.5 419.3M369.9 429.3L359.8 428.9M436.0 168.5L464.1 164.9M433.2 184.9L461.9 179.5M460.4 168.5L487.7 164.8M457.5 184.6L484.2 180.3M483.7 168.5L511.7 165.5M543.5 348.1L540.2 352.0M551.2 359.4L548.5 364.2M557.2 370.6L554.8 376.0" stroke="#FAA200" stroke-width="1.15" fill="none"/>
<path d="M234.8 255.8L236.4 263.0L233.9 263.1ZM318.9 174.4L312.9 180.3L311.2 177.9ZM336.2 233.0L331.5 241.9L328.9 240.0ZM326.6 256.6L324.4 268.4L321.4 267.4ZM321.1 269.3L320.4 282.1L317.3 281.5ZM382.4 161.2L373.5 165.7L372.5 162.6ZM373.0 205.7L365.5 212.5L363.7 209.8ZM316.7 412.9L320.4 412.7L320.0 414.6ZM397.6 191.7L388.5 197.3L387.2 194.4ZM418.1 162.3L408.0 166.3L407.3 163.2ZM344.3 422.1L348.1 421.2L348.1 423.2ZM439.2 162.8L428.4 166.7L427.7 163.5ZM436.9 178.9L426.0 183.0L425.3 179.9ZM360.5 419.3L364.9 418.4L364.9 420.4ZM359.8 428.9L363.9 428.0L363.8 430.0ZM464.1 164.9L453.1 168.0L452.7 164.8ZM461.9 179.5L450.7 183.2L450.1 180.1ZM487.7 164.8L477.0 167.9L476.6 164.7ZM484.2 180.3L473.7 183.6L473.2 180.5ZM511.7 165.5L500.7 168.3L500.3 165.1Z" fill="#FAA200" stroke="#FAA200" stroke-width="0.6"/>
<path d="M231.6 322.9L229.6 308.0M227.5 369.8L223.8 355.9" stroke="#FF7800" stroke-width="1.15" fill="none"/>
<path d="M229.6 308.0L231.4 313.8L229.3 314.1ZM223.8 355.9L226.3 361.2L224.3 361.7Z" fill="#FF7800" stroke="#FF7800" stroke-width="0.6"/>
<path d="M230.2 338.7L228.1 325.4M228.9 354.4L225.4 339.9M298.0 220.8L308.9 208.7M296.1 237.6L305.9 225.1M287.1 318.2L290.9 295.6M285.4 333.7L286.6 311.6M435.9 419.3L421.9 422.1M451.5 427.0L446.5 427.5" stroke="#FF6400" stroke-width="1.15" fill="none"/>
<path d="M228.1 325.4L229.9 330.6L227.9 330.9ZM225.4 339.9L227.8 345.5L225.8 345.9ZM308.9 208.7L305.4 214.3L303.7 212.8ZM305.9 225.1L302.9 230.8L301.1 229.4ZM290.9 295.6L290.9 304.9L287.8 304.4ZM286.6 311.6L287.7 320.5L284.6 320.4ZM421.9 422.1L427.3 420.0L427.7 421.9Z" fill="#FF6400" stroke="#FF6400" stroke-width="0.6"/>
<path d="M294.3 254.2L303.0 240.0M292.5 270.6L300.3 254.9M290.7 286.7L297.6 268.2M288.9 302.6L294.4 280.8" stroke="#FF5000" stroke-width="1.15" fill="none"/>
<path d="M303.0 240.0L300.5 246.3L298.5 245.1ZM300.3 254.9L298.3 261.7L296.1 260.6ZM297.6 268.2L296.1 276.1L293.5 275.1ZM294.4 280.8L293.7 289.9L290.7 289.1Z" fill="#FF5000" stroke="#FF5000" stroke-width="0.6"/>
<path d="M337.0 328.9L319.9 321.2M335.0 343.7L317.3 337.7M359.6 297.3L362.5 290.4M351.0 356.4L333.1 353.2M375.0 281.1L378.1 275.1M363.9 355.0L348.5 351.6M393.7 279.9L396.4 276.3M379.8 367.1L367.1 364.4M417.4 278.3L418.9 276.9M400.5 378.1L388.6 375.2M386.8 458.9L382.4 458.5M416.3 413.1L405.0 412.6M414.6 422.5L403.8 421.7M481.9 274.1L480.0 272.7M494.8 273.2L495.1 271.9M505.7 272.5L503.9 270.8M472.1 433.0L469.1 428.1M517.2 271.8L514.4 269.9M483.0 431.2L481.1 426.3M539.7 270.3L537.1 268.3M518.7 363.4L516.0 365.8M506.4 418.3L504.8 415.9M504.2 427.7L504.9 422.8M550.7 269.6L546.1 266.7M526.5 374.7L523.1 377.9M516.8 416.7L517.2 413.3M514.7 426.0L516.3 421.0M562.1 268.8L557.3 265.9M573.1 268.1L568.3 265.1M582.4 267.5L577.6 264.6" stroke="#E1E100" stroke-width="1.15" fill="none"/>
<path d="M319.9 321.2L327.3 323.1L326.2 325.5ZM317.3 337.7L324.8 338.9L324.0 341.4ZM362.5 290.4L362.2 293.6L360.4 292.8ZM333.1 353.2L340.5 353.2L340.0 355.7ZM378.1 275.1L377.7 278.0L376.0 277.1ZM348.5 351.6L354.9 351.9L354.4 354.0ZM367.1 364.4L372.4 364.5L372.0 366.4ZM388.6 375.2L393.6 375.4L393.1 377.3ZM405.0 412.6L409.5 411.8L409.4 413.8ZM403.8 421.7L408.2 421.0L408.1 423.0Z" fill="#E1E100" stroke="#E1E100" stroke-width="0.6"/>
<path d="M353.1 341.9L332.4 340.8M372.7 296.3L371.1 293.3M418.3 401.8L406.3 401.4M410.9 443.0L401.8 442.7M408.7 455.1L403.1 455.4M406.5 467.5L403.3 467.7M460.6 289.8L457.5 288.7M461.8 434.6L457.9 429.7M502.8 286.6L498.4 284.0M514.2 285.8L509.7 283.0M480.4 442.9L479.3 435.6M525.1 284.9L520.7 282.3M493.3 429.5L492.5 424.1M536.6 284.1L532.1 281.4M547.5 283.3L542.5 280.3M558.9 282.4L553.9 279.4M569.9 281.6L564.9 278.6M579.1 280.9L574.1 277.9" stroke="#CAE400" stroke-width="1.15" fill="none"/>
<path d="M332.4 340.8L340.8 339.8L340.6 342.7ZM406.3 401.4L411.1 400.6L411.1 402.6ZM401.8 442.7L405.5 441.8L405.4 443.8ZM457.9 429.7L460.2 431.1L458.7 432.3ZM479.3 435.6L480.7 438.4L478.8 438.7Z" fill="#CAE400" stroke="#CAE400" stroke-width="0.6"/>
<path d="M391.3 294.9L387.9 294.0M414.9 293.2L411.8 292.9M440.9 276.8L438.3 276.5M423.1 375.3L411.3 372.6M420.7 388.6L408.1 388.1M439.8 398.8L425.8 399.2M432.0 439.5L423.9 438.3M429.7 451.6L423.6 450.0M427.4 463.8L422.8 463.0M479.1 288.4L475.4 286.5M449.6 436.6L444.4 432.8M447.2 448.6L443.4 442.4M444.8 460.7L441.5 454.3M491.9 287.4L488.0 285.5M463.7 425.0L458.6 422.6M459.3 446.5L456.3 439.4M456.9 458.5L454.1 451.0M474.1 423.4L469.6 421.2M469.6 444.8L467.4 437.5M467.1 456.7L465.3 448.6M485.0 421.7L480.7 419.7M477.9 454.8L477.1 446.5M490.8 441.2L490.5 433.6M488.2 453.0L488.0 444.7M515.9 376.1L510.9 377.5M501.6 439.3L502.3 432.0M499.0 451.1L499.6 442.9M512.0 437.5L513.6 430.4M509.3 449.2L510.7 441.2M525.6 424.2L527.4 419.0M522.9 435.7L525.1 429.0M520.2 447.3L522.2 439.6M536.1 422.5L537.8 418.0M533.3 433.9L535.8 428.6M530.5 445.5L533.0 439.5M547.1 411.9L547.4 409.1M544.9 421.1L546.7 417.6M542.1 432.4L544.6 428.6M539.3 443.9L541.7 440.1" stroke="#B4E600" stroke-width="1.15" fill="none"/>
<path d="M411.3 372.6L416.2 372.7L415.8 374.7ZM408.1 388.1L413.2 387.3L413.1 389.3ZM425.8 399.2L431.4 398.1L431.4 400.1ZM423.9 438.3L427.3 437.8L427.0 439.8ZM423.6 450.0L426.3 449.7L425.8 451.6ZM444.4 432.8L447.1 433.5L445.9 435.2ZM443.4 442.4L445.8 444.4L444.1 445.4ZM441.5 454.3L443.7 456.4L441.9 457.3ZM456.3 439.4L458.5 441.8L456.6 442.6ZM454.1 451.0L456.2 453.7L454.3 454.4ZM467.4 437.5L469.3 440.1L467.4 440.7ZM465.3 448.6L467.0 451.7L465.0 452.1ZM477.1 446.5L478.4 449.8L476.4 449.9ZM490.5 433.6L491.6 436.6L489.6 436.7ZM488.0 444.7L489.1 448.0L487.1 448.0ZM502.3 432.0L503.1 435.0L501.1 434.8ZM499.6 442.9L500.3 446.2L498.3 446.1ZM513.6 430.4L513.9 433.5L512.0 433.1ZM510.7 441.2L511.2 444.6L509.2 444.3ZM525.1 429.0L525.1 432.0L523.2 431.4ZM522.2 439.6L522.4 443.0L520.4 442.4ZM533.0 439.5L532.9 442.3L531.1 441.5Z" fill="#B4E600" stroke="#B4E600" stroke-width="0.6"/>
<path d="M438.2 291.4L434.4 291.4M510.4 351.9L506.3 351.9M507.6 364.8L503.1 364.6M495.4 420.0L490.5 418.2M527.8 414.9L526.8 411.1M538.3 413.3L537.3 409.9" stroke="#7DEE00" stroke-width="1.15" fill="none"/>
<path d="M425.5 361.8L415.5 356.9M447.3 359.2L438.1 355.0M444.8 372.6L435.5 368.6M465.4 357.1L457.3 354.1M457.6 396.3L447.6 396.6M455.4 407.4L445.4 407.7M477.9 355.7L470.7 353.4M488.6 354.4L482.4 352.7M496.9 366.1L491.2 364.9M487.2 411.5L478.2 413.3M534.7 385.6L526.7 385.8" stroke="#23F214" stroke-width="1.15" fill="none"/>
<path d="M415.5 356.9L419.9 357.9L419.1 359.7ZM438.1 355.0L442.2 355.8L441.4 357.6ZM435.5 368.6L439.6 369.3L438.8 371.1ZM457.3 354.1L460.9 354.4L460.2 356.2ZM447.6 396.6L451.6 395.5L451.6 397.5ZM445.4 407.7L449.4 406.5L449.4 408.5ZM470.7 353.4L473.9 353.3L473.3 355.2ZM482.4 352.7L485.1 352.5L484.6 354.4ZM478.2 413.3L481.6 411.6L482.0 413.6ZM526.7 385.8L529.9 384.7L529.9 386.7Z" fill="#23F214" stroke="#23F214" stroke-width="0.6"/>
<path d="M442.3 385.8L430.7 384.9M499.7 353.1L494.6 352.0M545.3 384.1L539.3 384.3" stroke="#46F500" stroke-width="1.15" fill="none"/>
<path d="M430.7 384.9L435.4 384.2L435.3 386.2ZM539.3 384.3L541.7 383.2L541.7 385.2Z" fill="#46F500" stroke="#46F500" stroke-width="0.6"/>
<path d="M462.8 370.4L454.1 367.3M475.2 368.8L467.2 366.3M485.8 367.5L478.7 365.6M504.8 377.5L497.4 377.3" stroke="#00F028" stroke-width="1.15" fill="none"/>
<path d="M454.1 367.3L457.9 367.6L457.3 369.4ZM467.2 366.3L470.7 366.4L470.1 368.3ZM478.7 365.6L481.8 365.4L481.3 367.3ZM497.4 377.3L500.4 376.4L500.3 378.4Z" fill="#00F028" stroke="#00F028" stroke-width="0.6"/>
<path d="M460.2 383.4L450.5 381.6M494.2 378.9L486.1 378.2" stroke="#00E873" stroke-width="1.15" fill="none"/>
<path d="M450.5 381.6L454.6 381.3L454.2 383.3ZM486.1 378.2L489.4 377.5L489.2 379.5Z" fill="#00E873" stroke="#00E873" stroke-width="0.6"/>
<path d="M472.6 381.8L463.7 380.1M470.0 394.6L459.0 394.9M467.7 405.6L456.7 405.9M483.1 380.4L474.9 379.1M497.6 409.9L488.6 410.8M523.6 387.1L514.6 387.4" stroke="#00E1BE" stroke-width="1.15" fill="none"/>
<path d="M463.7 380.1L467.5 379.8L467.1 381.7ZM459.0 394.9L463.3 393.8L463.4 395.8ZM456.7 405.9L461.1 404.8L461.1 406.8ZM474.9 379.1L478.3 378.6L478.0 380.6ZM488.6 410.8L492.1 409.5L492.3 411.5ZM514.6 387.4L518.2 386.3L518.3 388.3Z" fill="#00E1BE" stroke="#00E1BE" stroke-width="0.6"/>
<path d="M480.4 393.1L468.4 393.5M478.2 404.0L465.2 404.4M491.5 391.6L478.5 392.0M502.0 390.1L489.0 390.5" stroke="#0060FF" stroke-width="1.15" fill="none"/>
<path d="M468.4 393.5L473.2 392.4L473.3 394.3ZM465.2 404.4L470.3 403.3L470.4 405.3ZM478.5 392.0L483.6 390.8L483.7 392.8ZM489.0 390.5L494.2 389.4L494.2 391.4Z" fill="#0060FF" stroke="#0060FF" stroke-width="0.6"/>
<path d="M489.1 402.4L476.1 402.8" stroke="#0048FF" stroke-width="1.15" fill="none"/>
<path d="M476.1 402.8L481.3 401.7L481.4 403.7Z" fill="#0048FF" stroke="#0048FF" stroke-width="0.6"/>
<path d="M499.6 400.9L483.6 401.4" stroke="#0030FF" stroke-width="1.15" fill="none"/>
<path d="M483.6 401.4L490.0 400.1L490.1 402.3Z" fill="#0030FF" stroke="#0030FF" stroke-width="0.6"/>
<path d="M513.0 388.6L501.0 388.9M508.6 408.3L494.6 408.7" stroke="#0080FA" stroke-width="1.15" fill="none"/>
<path d="M501.0 388.9L505.8 387.8L505.9 389.8ZM494.6 408.7L500.2 407.5L500.2 409.5Z" fill="#0080FA" stroke="#0080FA" stroke-width="0.6"/>
<path d="M510.6 399.3L488.6 400.0M519.1 406.7L495.1 407.4" stroke="#0018FF" stroke-width="1.15" fill="none"/>
<path d="M488.6 400.0L497.4 398.1L497.5 401.2ZM495.1 407.4L504.7 405.5L504.8 408.7Z" fill="#0018FF" stroke="#0018FF" stroke-width="0.6"/>
<path d="M521.2 397.8L491.2 398.7M532.2 396.1L502.2 397.0M530.1 405.0L500.1 405.9M542.8 394.6L512.8 395.5M540.6 403.4L510.6 404.3M551.7 393.3L521.7 394.2M549.5 402.1L519.5 403.0" stroke="#0000FF" stroke-width="1.15" fill="none"/>
<path d="M491.2 398.7L503.1 396.7L503.2 399.9ZM502.2 397.0L514.2 395.1L514.2 398.3ZM500.1 405.9L512.1 403.9L512.2 407.1ZM512.8 395.5L524.7 393.5L524.8 396.7ZM510.6 404.3L522.6 402.3L522.7 405.5ZM521.7 394.2L533.6 392.2L533.7 395.4ZM519.5 403.0L531.5 401.0L531.6 404.2Z" fill="#0000FF" stroke="#0000FF" stroke-width="0.6"/>
<ellipse cx="567.9" cy="133.8" rx="70.5" ry="13" transform="rotate(11.9 567.9 133.8)" fill="#426BA8"/>
<path d="M216.3 130.6L216.3 126.2" stroke="#CAE400" stroke-width="1.15" fill="none"/>
<path d="M248.0 131.3L255.0 127.5M278.2 131.9L290.0 128.3M307.9 132.4L323.7 128.8M336.2 133.0L354.6 130.0M615.3 132.7L616.8 127.5" stroke="#E6D700" stroke-width="1.15" fill="none"/>
<path d="M255.0 127.5L252.7 129.9L251.7 128.1ZM290.0 128.3L285.5 130.7L285.0 128.8ZM323.7 128.8L317.7 131.4L317.2 129.2ZM354.6 130.0L347.4 132.5L347.0 129.9Z" fill="#E6D700" stroke="#E6D700" stroke-width="0.6"/>
<path d="M363.6 133.5L385.3 130.8M383.1 133.9L405.5 131.6M397.1 134.2L420.5 132.8M416.7 134.6L441.4 133.6M605.7 132.5L608.8 127.8M610.5 132.6L612.8 127.6" stroke="#EBCD00" stroke-width="1.15" fill="none"/>
<path d="M385.3 130.8L376.8 133.4L376.4 130.4ZM405.5 131.6L396.7 134.1L396.4 131.0ZM420.5 132.8L411.2 134.9L411.0 131.7ZM441.4 133.6L431.6 135.6L431.5 132.4Z" fill="#EBCD00" stroke="#EBCD00" stroke-width="0.6"/>
<path d="M441.7 135.1L469.7 134.2M466.3 135.6L496.2 135.2M489.9 135.6L519.7 135.1M509.6 134.9L536.8 133.2M594.3 132.2L599.2 128.1M600.0 132.4L604.0 128.0" stroke="#F0BE00" stroke-width="1.15" fill="none"/>
<path d="M469.7 134.2L458.5 136.2L458.4 133.0ZM496.2 135.2L484.3 136.9L484.3 133.7ZM519.7 135.1L507.8 136.9L507.8 133.7ZM536.8 133.2L526.0 135.5L525.8 132.3ZM599.2 128.1L597.9 130.5L596.6 129.0Z" fill="#F0BE00" stroke="#F0BE00" stroke-width="0.6"/>
<path d="M558.5 133.3L569.1 131.0M570.6 132.9L579.4 130.0M564.6 133.1L574.3 130.5M576.4 132.7L584.3 129.5" stroke="#FAA200" stroke-width="1.15" fill="none"/>
<path d="M569.1 131.0L565.1 132.9L564.7 130.9ZM579.4 130.0L576.2 132.1L575.5 130.2ZM574.3 130.5L570.6 132.5L570.1 130.5ZM584.3 129.5L581.5 131.7L580.7 129.8Z" fill="#FAA200" stroke="#FAA200" stroke-width="0.6"/>
<path d="M582.2 132.5L589.1 129.0M588.3 132.3L594.2 128.5" stroke="#F5AF00" stroke-width="1.15" fill="none"/>
<path d="M589.1 129.0L586.8 131.3L585.9 129.5ZM594.2 128.5L592.4 130.8L591.3 129.1Z" fill="#F5AF00" stroke="#F5AF00" stroke-width="0.6"/>
<path d="M176 98 L574 112.5" stroke="#FF0000" stroke-width="1" fill="none"/>
<path d="M574 112.5 L682 158.5" stroke="#FF0000" stroke-width="1" fill="none"/>
<path d="M176 98 L155.5 471.5" stroke="#FF0000" stroke-width="1" fill="none"/>
<path d="M244 156 L208.5 575" stroke="#FF0000" stroke-width="1" fill="none"/>
<path d="M682 158.5 L589 492.5" stroke="#FF0000" stroke-width="1" fill="none"/>
<path d="M589 492.5 L208.5 575" stroke="#FF0000" stroke-width="1" fill="none"/>
<path d="M208.5 575 L155.5 471.5" stroke="#FF0000" stroke-width="1" fill="none"/>
</g>
<g shape-rendering="crispEdges">
<rect x="0" y="0" width="819" height="28" fill="#8DB9A4"/>
<rect x="0" y="0" width="819" height="1" fill="#7CAE97"/>
<rect x="0" y="1" width="819" height="1" fill="#DCEBE4"/>
<rect x="0" y="26" width="819" height="2" fill="#A3C8B7"/>
<rect x="0" y="4" width="22" height="1" fill="#EEF5F1"/>
<rect x="0" y="4" width="1" height="21" fill="#EEF5F1"/>
<rect x="21" y="5" width="1" height="20" fill="#6F9F89"/>
<rect x="1" y="24" width="21" height="1" fill="#6F9F89"/>
<rect x="22" y="4" width="1" height="22" fill="#000"/>
<rect x="0" y="25" width="23" height="1" fill="#000"/>
<rect x="23" y="4" width="22" height="1" fill="#EEF5F1"/>
<rect x="23" y="4" width="1" height="21" fill="#EEF5F1"/>
<rect x="44" y="5" width="1" height="20" fill="#6F9F89"/>
<rect x="24" y="24" width="21" height="1" fill="#6F9F89"/>
<rect x="45" y="4" width="1" height="22" fill="#000"/>
<rect x="23" y="25" width="23" height="1" fill="#000"/>
<rect x="46" y="4" width="22" height="1" fill="#EEF5F1"/>
<rect x="46" y="4" width="1" height="21" fill="#EEF5F1"/>
<rect x="67" y="5" width="1" height="20" fill="#6F9F89"/>
<rect x="47" y="24" width="21" height="1" fill="#6F9F89"/>
<rect x="68" y="4" width="1" height="22" fill="#000"/>
<rect x="46" y="25" width="23" height="1" fill="#000"/>
<rect x="69" y="4" width="22" height="1" fill="#EEF5F1"/>
<rect x="69" y="4" width="1" height="21" fill="#EEF5F1"/>
<rect x="90" y="5" width="1" height="20" fill="#6F9F89"/>
<rect x="70" y="24" width="21" height="1" fill="#6F9F89"/>
<rect x="91" y="4" width="1" height="22" fill="#000"/>
<rect x="69" y="25" width="23" height="1" fill="#000"/>
<rect x="92" y="4" width="22" height="1" fill="#EEF5F1"/>
<rect x="92" y="4" width="1" height="21" fill="#EEF5F1"/>
<rect x="113" y="5" width="1" height="20" fill="#6F9F89"/>
<rect x="93" y="24" width="21" height="1" fill="#6F9F89"/>
<rect x="114" y="4" width="1" height="22" fill="#000"/>
<rect x="92" y="25" width="23" height="1" fill="#000"/>
<path d="M7 8 H13.5 L17.5 12 V20 H7 Z" transform="translate(1,1)" fill="none" stroke="#EEF5F1" stroke-width="1"/>
<path d="M7 8 H13.5 L17.5 12 V20 H7 Z" fill="none" stroke="#5A8C76" stroke-width="1"/>
<path d="M13.5 8 V12 H17.5" fill="none" stroke="#5A8C76" stroke-width="1"/>
<path d="M28 15 H43 L38.5 20.5 H28 Z" transform="translate(0.8,0.8)" fill="#EEF5F1"/>
<path d="M27.5 11 H37 V14.5 H27.5 Z" fill="#5A8C76" fill-opacity="0.45"/>
<path d="M27.5 11 H31 V10 H27.5 Z" fill="#5A8C76" fill-opacity="0.45"/>
<path d="M27.5 14.5 H42.5 L38 20 H27.5 Z" fill="#5A8C76"/>
<path d="M35.5 9.5 Q38.5 6 41.5 10.5" fill="none" stroke="#5A8C76" stroke-width="1"/>
<path d="M39.5 11.5 H42.5 V8.5" fill="none" stroke="#EEF5F1" stroke-width="1"/>
<rect x="51" y="8.4" width="14" height="13.5" fill="#EEF5F1"/>
<rect x="50" y="7.4" width="14" height="13.5" fill="#5A8C76"/>
<rect x="53" y="8.5" width="8.2" height="5.5" fill="#8DB9A4"/>
<path d="M53 14 V8.5 H61.2" fill="none" stroke="#EEF5F1" stroke-width="1"/>
<rect x="58.8" y="16.8" width="2" height="3.4" fill="#EEF5F1"/>
<path d="M75.8 8 H84.8 L83.6 12.2 H74.6 Z" fill="#fff" stroke="#000" stroke-width="1"/>
<path d="M77 10 H83.5" stroke="#000" stroke-width="0.8"/>
<path d="M72.5 14 L75 12.2 H86 L87.5 13.5 V18 L84.5 20.8 H72.5 Z" fill="#D9E6DF" stroke="#000" stroke-width="1"/>
<path d="M72.5 14 H84.5 L87.5 12.5 M84.5 14 V20.8" fill="none" stroke="#000" stroke-width="1"/>
<rect x="73.5" y="16" width="10.5" height="2" fill="#5A8C76"/>
<rect x="73" y="18.3" width="11.5" height="1" fill="#000"/>
<rect x="79.3" y="16.5" width="2.8" height="1.2" fill="#E8C800"/>
<path d="M85.5 14.5 L86.5 13.7 M85.5 16.5 L86.5 15.7 M85.5 18.5 L86.5 17.7" stroke="#000" stroke-width="0.8"/>
<circle cx="104.2" cy="14.7" r="7.4" fill="#EEF5F1" shape-rendering="auto"/>
<circle cx="103.4" cy="13.9" r="7.4" fill="#5A8C76" shape-rendering="auto"/>
<rect x="251" y="6" width="78" height="18" fill="#fff"/>
<rect x="251" y="6" width="78" height="1" fill="#5E8F79"/>
<rect x="251" y="6" width="1" height="18" fill="#5E8F79"/>
<rect x="252" y="7" width="76" height="1" fill="#000"/>
<rect x="252" y="7" width="1" height="16" fill="#000"/>
<rect x="251" y="23" width="78" height="1" fill="#E4EFEA"/>
<rect x="328" y="6" width="1" height="18" fill="#E4EFEA"/>
<rect x="252" y="22" width="76" height="1" fill="#C9D9D1"/>
<rect x="327" y="7" width="1" height="16" fill="#C9D9D1"/>
<text x="261.5" y="19.5" font-family="Liberation Mono, monospace" font-size="11.5" fill="#000" textLength="28" lengthAdjust="spacingAndGlyphs">CHAM</text>
<rect x="351" y="6" width="148" height="18" fill="#fff"/>
<rect x="351" y="6" width="148" height="1" fill="#5E8F79"/>
<rect x="351" y="6" width="1" height="18" fill="#5E8F79"/>
<rect x="352" y="7" width="146" height="1" fill="#000"/>
<rect x="352" y="7" width="1" height="16" fill="#000"/>
<rect x="351" y="23" width="148" height="1" fill="#E4EFEA"/>
<rect x="498" y="6" width="1" height="18" fill="#E4EFEA"/>
<rect x="352" y="22" width="146" height="1" fill="#C9D9D1"/>
<rect x="497" y="7" width="1" height="16" fill="#C9D9D1"/>
<text x="361" y="19.5" font-family="Liberation Mono, monospace" font-size="11.5" fill="#000" textLength="42" lengthAdjust="spacingAndGlyphs">DOMAIN</text>
<rect x="0" y="616" width="819" height="26" fill="#8DB9A4"/>
<rect x="0" y="616" width="819" height="1" fill="#86B39E"/>
<rect x="0" y="618" width="818" height="1" fill="#5E8F79"/>
<rect x="0" y="618" width="1" height="23" fill="#5E8F79"/>
<rect x="818" y="618" width="1" height="5" fill="#EEF5F2"/>
<rect x="0" y="641" width="800" height="1" fill="#E8F0EC"/>
<path d="M813 641 L818 636" stroke="#E8F0EC" stroke-width="1"/>
<path d="M814.5 641 L818 637.5" stroke="#5E8F79" stroke-width="2.4"/>
<path d="M808 641 L818 631" stroke="#E8F0EC" stroke-width="1"/>
<path d="M809.5 641 L818 632.5" stroke="#5E8F79" stroke-width="2.4"/>
<path d="M803 641 L818 626" stroke="#E8F0EC" stroke-width="1"/>
<path d="M804.5 641 L818 627.5" stroke="#5E8F79" stroke-width="2.4"/>
<text x="3" y="635" font-family="Liberation Serif, serif" font-size="16.5" fill="#000" textLength="42" lengthAdjust="spacingAndGlyphs">Ready</text>
</g>
<g>
<text x="0.5" y="60" font-family="Liberation Sans, sans-serif" stroke-width="0.3" font-size="16.2" fill="#fff" stroke="#fff" textLength="102" lengthAdjust="spacingAndGlyphs">Temperature</text>
<text x="5.2" y="82.1" font-family="Liberation Sans, sans-serif" stroke-width="0.3" font-size="16.0" fill="#FF0000" stroke="#FF0000" textLength="76" lengthAdjust="spacingAndGlyphs">1.958E+03</text>
<text x="5.2" y="104.5" font-family="Liberation Sans, sans-serif" stroke-width="0.3" font-size="16.0" fill="#FF3800" stroke="#FF3800" textLength="76" lengthAdjust="spacingAndGlyphs">1.847E+03</text>
<text x="5.2" y="127.0" font-family="Liberation Sans, sans-serif" stroke-width="0.3" font-size="16.0" fill="#FF5010" stroke="#FF5010" textLength="76" lengthAdjust="spacingAndGlyphs">1.735E+03</text>
<text x="5.2" y="149.4" font-family="Liberation Sans, sans-serif" stroke-width="0.3" font-size="16.0" fill="#FF7800" stroke="#FF7800" textLength="76" lengthAdjust="spacingAndGlyphs">1.624E+03</text>
<text x="5.2" y="171.9" font-family="Liberation Sans, sans-serif" stroke-width="0.3" font-size="16.0" fill="#FF9800" stroke="#FF9800" textLength="76" lengthAdjust="spacingAndGlyphs">1.513E+03</text>
<text x="5.2" y="194.3" font-family="Liberation Sans, sans-serif" stroke-width="0.3" font-size="16.0" fill="#FFA800" stroke="#FFA800" textLength="76" lengthAdjust="spacingAndGlyphs">1.402E+03</text>
<text x="5.2" y="216.8" font-family="Liberation Sans, sans-serif" stroke-width="0.3" font-size="16.0" fill="#F8D000" stroke="#F8D000" textLength="76" lengthAdjust="spacingAndGlyphs">1.290E+03</text>
<text x="5.2" y="239.2" font-family="Liberation Sans, sans-serif" stroke-width="0.3" font-size="16.0" fill="#FFC800" stroke="#FFC800" textLength="76" lengthAdjust="spacingAndGlyphs">1.179E+03</text>
<text x="5.2" y="261.7" font-family="Liberation Sans, sans-serif" stroke-width="0.3" font-size="16.0" fill="#C8E000" stroke="#C8E000" textLength="76" lengthAdjust="spacingAndGlyphs">1.068E+03</text>
<text x="5.2" y="284.1" font-family="Liberation Sans, sans-serif" stroke-width="0.3" font-size="16.0" fill="#18F008" stroke="#18F008" textLength="76" lengthAdjust="spacingAndGlyphs">9.567E+02</text>
<text x="5.2" y="306.6" font-family="Liberation Sans, sans-serif" stroke-width="0.3" font-size="16.0" fill="#20FF00" stroke="#20FF00" textLength="76" lengthAdjust="spacingAndGlyphs">8.454E+02</text>
<text x="5.2" y="329.0" font-family="Liberation Sans, sans-serif" stroke-width="0.3" font-size="16.0" fill="#00E0C0" stroke="#00E0C0" textLength="76" lengthAdjust="spacingAndGlyphs">7.342E+02</text>
<text x="5.2" y="351.5" font-family="Liberation Sans, sans-serif" stroke-width="0.3" font-size="16.0" fill="#10B0E8" stroke="#10B0E8" textLength="76" lengthAdjust="spacingAndGlyphs">6.229E+02</text>
<text x="5.2" y="373.9" font-family="Liberation Sans, sans-serif" stroke-width="0.3" font-size="16.0" fill="#0060FF" stroke="#0060FF" textLength="76" lengthAdjust="spacingAndGlyphs">5.117E+02</text>
<text x="5.2" y="396.4" font-family="Liberation Sans, sans-serif" stroke-width="0.3" font-size="16.0" fill="#0030FF" stroke="#0030FF" textLength="76" lengthAdjust="spacingAndGlyphs">4.005E+02</text>
<text x="5.2" y="418.9" font-family="Liberation Sans, sans-serif" stroke-width="0.3" font-size="16.0" fill="#0000FF" stroke="#0000FF" textLength="76" lengthAdjust="spacingAndGlyphs">2.892E+02</text>
<text x="676" y="60" font-family="Liberation Sans, sans-serif" stroke-width="0.3" font-size="16.2" fill="#fff" stroke="#fff" textLength="93" lengthAdjust="spacingAndGlyphs">Probe value</text>
<text x="680" y="82.5" font-family="Liberation Sans, sans-serif" stroke-width="0.3" font-size="15.8" fill="#fff" stroke="#fff" textLength="76" lengthAdjust="spacingAndGlyphs">1.688E+03</text>
<text x="672" y="111.5" font-family="Liberation Sans, sans-serif" stroke-width="0.3" font-size="16.2" fill="#fff" stroke="#fff" textLength="108" lengthAdjust="spacingAndGlyphs">Surface value</text>
<text x="680" y="133.5" font-family="Liberation Sans, sans-serif" stroke-width="0.3" font-size="15.8" fill="#fff" stroke="#fff" textLength="76" lengthAdjust="spacingAndGlyphs">1.673E+03</text>
</g>
</svg>
</body></html>
